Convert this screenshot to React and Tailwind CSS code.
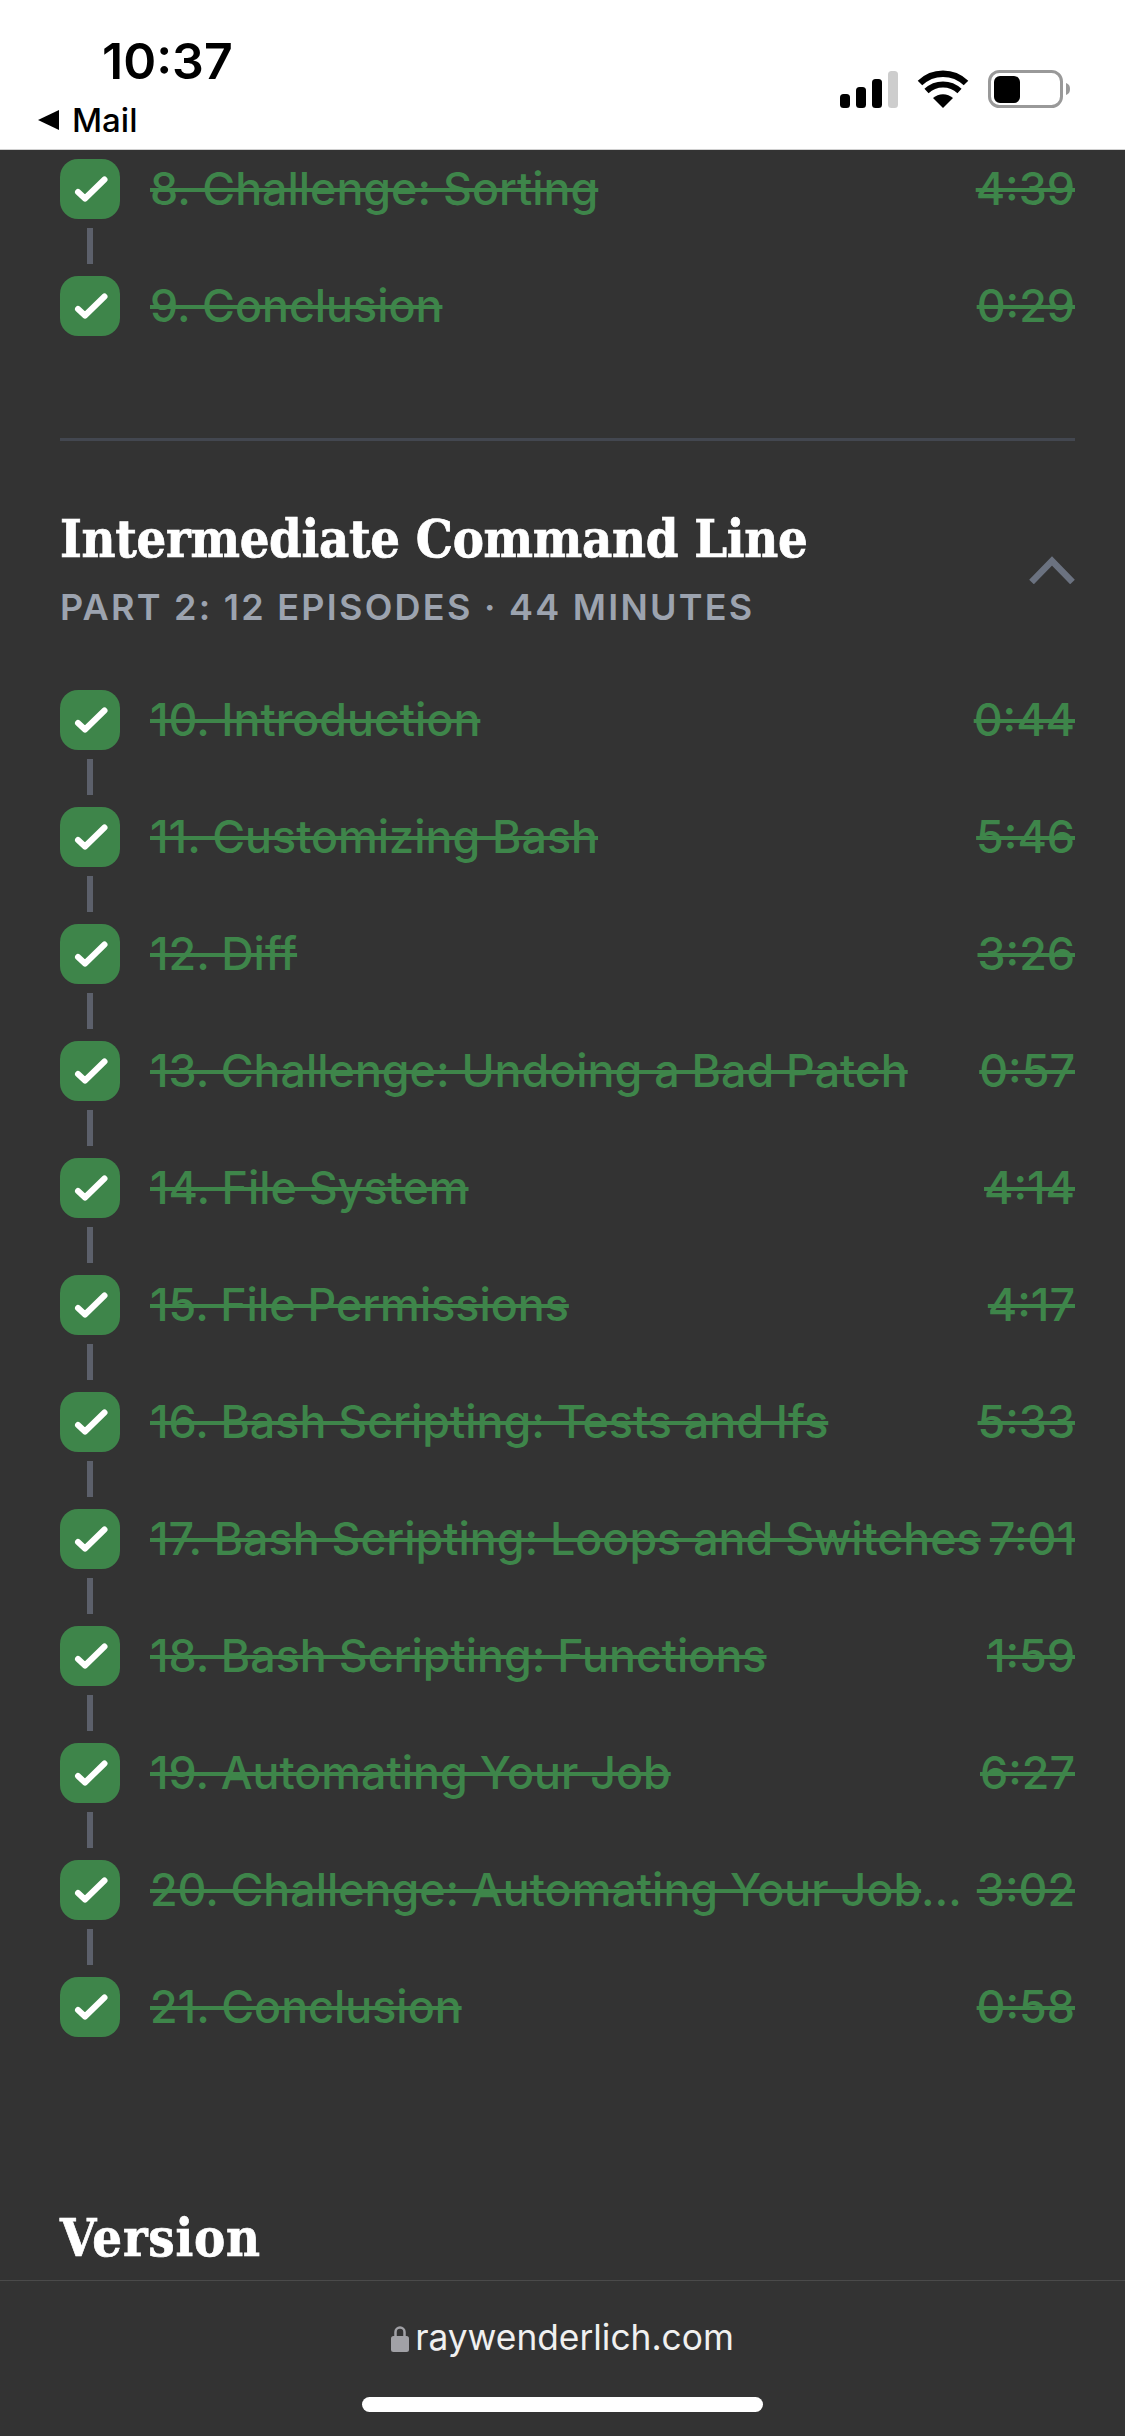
import React from "react";

const part1 = [
  ["8. Challenge: Sorting", "4:39"],
  ["9. Conclusion", "0:29"],
];
const part2 = [
  ["10. Introduction", "0:44"],
  ["11. Customizing Bash", "5:46"],
  ["12. Diff", "3:26"],
  ["13. Challenge: Undoing a Bad Patch", "0:57"],
  ["14. File System", "4:14"],
  ["15. File Permissions", "4:17"],
  ["16. Bash Scripting: Tests and Ifs", "5:33"],
  ["17. Bash Scripting: Loops and Switches", "7:01"],
  ["18. Bash Scripting: Functions", "1:59"],
  ["19. Automating Your Job", "6:27"],
  ["20. Challenge: Automating Your Job Using Bash", "3:02"],
  ["21. Conclusion", "0:58"],
];

function Check() {
  return (
    <div className="w-[60px] h-[60px] shrink-0 rounded-[18px] bg-[#3e854a]">
      <svg viewBox="0 0 60 60" className="w-[60px] h-[60px]">
        <path d="M18 33 L25 39.5 L44.5 20.5" fill="none" stroke="#fff" strokeWidth="6" strokeLinecap="round" strokeLinejoin="round" />
      </svg>
    </div>
  );
}

function Episodes({ items }) {
  return (
    <div className="flex flex-col">
      {items.map(([title, time], i) => (
        <div key={title} className="flex flex-col">
          <div className="flex h-[60px] items-center">
            <Check />
            <div className="ml-[30px] flex-1 min-w-0 truncate text-[44.8px] font-medium leading-[59px] text-[#3e854a] line-through">{title}</div>
            <div className="ml-[4px] shrink-0 text-[44.8px] font-medium leading-[59px] text-[#3e854a] line-through">{time}</div>
          </div>
          {i < items.length - 1 && <div className="ml-[27px] mt-[9px] mb-[12px] h-[36px] w-[6px] bg-[#5c606b]" />}
        </div>
      ))}
    </div>
  );
}

const serif = "font-['DejaVu_Serif_Condensed','DejaVu_Serif',serif] font-bold text-white [-webkit-text-stroke:0.7px_white]";

export default function App() {
  return (
    <div className="flex h-[2436px] w-[1125px] flex-col overflow-hidden bg-[#333333] font-['Inter','Liberation_Sans',sans-serif]">
      <header className="flex h-[150px] shrink-0 justify-between border-b-[1px] border-[#d0d0d0] bg-white pl-[38px] pr-[53px] text-black">
        <div className="flex flex-col">
          <div className="ml-[64px] mt-[33px] text-[50px] font-semibold leading-[56px]">10:37</div>
          <div className="mt-[12px] flex items-center gap-[12px] text-[33px] font-medium leading-[38px]">
            <svg viewBox="0 0 22 20" className="h-[20px] w-[22px]"><path d="M21 0 V20 L0 10 Z" fill="#000" /></svg>
            <span>Mail</span>
          </div>
        </div>
        <div className="mt-[70px] flex h-[38px] items-start">
          <svg viewBox="0 0 58 38" className="ml-0 h-[38px] w-[58px]">
            <rect x="0" y="24" width="10" height="14" rx="3.5" fill="#000" />
            <rect x="16" y="17" width="10" height="21" rx="3.5" fill="#000" />
            <rect x="32" y="9" width="10" height="29" rx="3.5" fill="#000" />
            <rect x="48" y="1" width="10" height="37" rx="3.5" fill="#cdcdcd" />
          </svg>
          <svg viewBox="0 0 52 38" className="ml-[19px] h-[38px] w-[52px]">
            <path d="M26 38 L16 28 A15 15 0 0 1 36 28 Z" fill="#000" />
            <path d="M9.5 21 A24 24 0 0 1 42.5 21" fill="none" stroke="#000" strokeWidth="6" />
            <path d="M3 13 A33 33 0 0 1 49 13" fill="none" stroke="#000" strokeWidth="6.5" />
          </svg>
          <svg viewBox="0 0 84 38" className="ml-[19px] h-[38px] w-[84px]">
            <rect x="1.5" y="1.5" width="72" height="35" rx="10" fill="none" stroke="#999" strokeWidth="3" />
            <rect x="6" y="6" width="26" height="27" rx="6" fill="#000" />
            <path d="M78 13 C81 14 82 16 82 19 C82 22 81 24 78 25 Z" fill="#999" />
          </svg>
        </div>
      </header>

      <main className="flex-1 min-h-0 overflow-hidden pr-[50px] pl-[60px] pt-[9px]">
        <Episodes items={part1} />
        <div className="mt-[102px] h-[3px] bg-[#434750]" />
        <div className="mt-[67px] flex items-start justify-between">
          <div>
            <h2 className={`${serif} text-[52px] leading-[62px] tracking-[-0.3px]`}>Intermediate Command Line</h2>
            <p className="mt-[17px] text-[36px] font-semibold leading-[40px] tracking-[2.25px] text-[#9ca3af]">PART 2: 12 EPISODES · 44 MINUTES</p>
          </div>
          <svg viewBox="0 0 46 28" className="mt-[48px] h-[28px] w-[46px]">
            <path d="M2.5 26 L23 5 L43.5 26" fill="none" stroke="#6b7280" strokeWidth="6.5" />
          </svg>
        </div>
        <div className="mt-[63px]"><Episodes items={part2} /></div>
        <h2 className={`${serif} mt-[170px] text-[52px] leading-[62px] tracking-[0.8px]`}>Version</h2>
      </main>

      <footer className="flex h-[156px] shrink-0 flex-col items-center border-t-[1px] border-[#4a4a4a] bg-[#333333]">
        <div className="mt-[33px] flex h-[48px] items-center gap-[6px] text-[35.3px] leading-[48px] text-[#f0f0f0]">
          <svg viewBox="0 0 18 27" className="h-[27px] w-[18px]">
            <path d="M4.5 12 V7 A4.5 4.5 0 0 1 13.5 7 V12" fill="none" stroke="#a1a1a6" strokeWidth="2.5" />
            <rect x="0" y="11" width="18" height="16" rx="2.5" fill="#a1a1a6" />
          </svg>
          <span>raywenderlich.com</span>
        </div>
        <div className="mt-[35px] h-[15px] w-[401px] rounded-full bg-white" />
      </footer>
    </div>
  );
}
